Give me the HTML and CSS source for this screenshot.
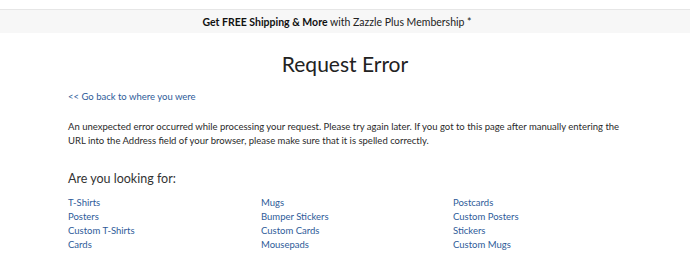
FILE: index.html
```html
<!DOCTYPE html>
<html>
<head>
<meta charset="utf-8">
<link rel="stylesheet" href="styles.css">
</head>
<body>
<div class="promo"><b>Get FREE Shipping &amp; More</b> with Zazzle Plus Membership *</div>
<main class="page">
  <h1 class="title">Request Error</h1>
  <a class="back" href="#">&lt;&lt; Go back to where you were</a>
  <p class="msg">An unexpected error occurred while processing your request. Please try again later. If you got to this page after manually entering the URL into the Address field of your browser, please make sure that it is spelled correctly.</p>
  <h2 class="sub">Are you looking for:</h2>
  <div class="links">
    <ul class="col">
      <li><a href="#">T-Shirts</a></li>
      <li><a href="#">Posters</a></li>
      <li><a href="#">Custom T-Shirts</a></li>
      <li><a href="#">Cards</a></li>
    </ul>
    <ul class="col">
      <li><a href="#">Mugs</a></li>
      <li><a href="#">Bumper Stickers</a></li>
      <li><a href="#">Custom Cards</a></li>
      <li><a href="#">Mousepads</a></li>
    </ul>
    <ul class="col">
      <li><a href="#">Postcards</a></li>
      <li><a href="#">Custom Posters</a></li>
      <li><a href="#">Stickers</a></li>
      <li><a href="#">Custom Mugs</a></li>
    </ul>
  </div>
</main>
</body>
</html>
```
FILE: styles.css
```css
html {
  overflow: hidden;
}
html, body {
  margin: 0;
  padding: 0;
  background: #ffffff;
}
body {
  font-family: Lato, "Liberation Sans", sans-serif;
  color: #333333;
  padding-top: 9px;
}
.promo {
  height: 24px;
  line-height: 24px;
  background: #f7f7f7;
  border-top: 1px solid #e6e6e6;
  box-sizing: border-box;
  text-align: center;
  font-size: 10.5px;
  color: #222;
  padding-right: 16px;
}
.promo b {
  font-weight: 700;
  color: #111;
}
.page {
  width: 554px;
  margin: 0 auto;
}
.title {
  margin: 16px 0 0;
  font-weight: 400;
  font-size: 21px;
  line-height: 30px;
  text-align: center;
  color: #222;
}
.back {
  display: block;
  margin-top: 11px;
  font-size: 9.5px;
  line-height: 14px;
  color: #2e5b99;
  text-decoration: none;
}
.msg {
  margin: 16px 0 0;
  font-size: 9.5px;
  line-height: 14px;
  color: #2a2a2a;
}
.sub {
  margin: 22px 0 0;
  font-weight: 400;
  font-size: 12.5px;
  line-height: 18px;
  color: #333;
}
.links {
  display: grid;
  grid-template-columns: 193px 192px 1fr;
  margin-top: 8px;
}
.col {
  list-style: none;
  margin: 0;
  padding: 0;
}
.col li {
  font-size: 9.5px;
  line-height: 14px;
}
.col a {
  color: #2e5b99;
  text-decoration: none;
}
```
